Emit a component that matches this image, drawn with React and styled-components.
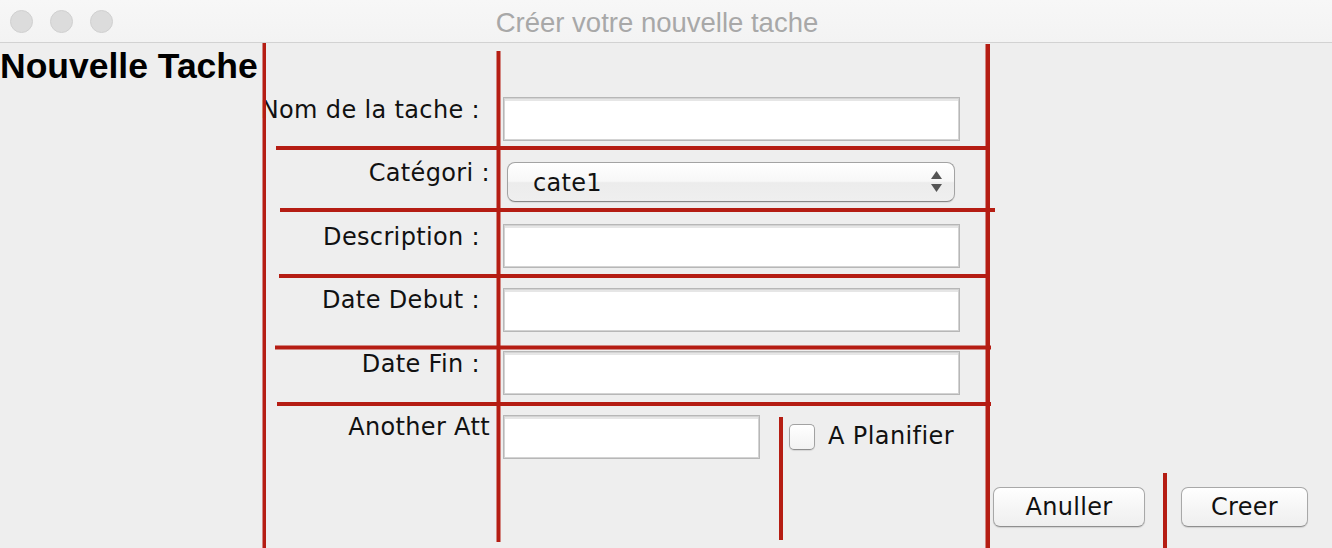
import React from "react";
import styled, { createGlobalStyle } from "styled-components";

const GlobalStyle = createGlobalStyle`
    html, body {
        margin: 0;
        padding: 0;
        background: #eeeeee;
    }
    * {
        box-sizing: border-box;
    }
`;

const Window = styled.div`
    position: relative;
    width: 1332px;
    height: 548px;
    overflow: hidden;
    background: #eeeeee;
    font-family: "DejaVu Sans", "Liberation Sans", sans-serif;
    color: #111111;
`;

const TitleBar = styled.div`
    display: grid;
    height: 43px;
    background: linear-gradient(#f7f7f7, #f3f3f3);
    border-bottom: 1px solid #d2d2d2;
    align-items: center;
`;

const Lights = styled.div`
    grid-area: 1 / 1;
    display: flex;
    gap: 17px;
    padding-left: 10px;
`;

const Light = styled.span`
    width: 23px;
    height: 23px;
    border-radius: 50%;
    background: #dcdcdc;
    border: 1px solid #d0d0d0;
`;

const WindowTitle = styled.div`
    grid-area: 1 / 1;
    text-align: center;
    padding-right: 18px;
    font-family: "Liberation Sans", Arial, sans-serif;
    font-size: 27.5px;
    color: #a8a8a8;
    margin-top: 3px;
`;

const Content = styled.div`
    padding-top: 3px;
`;

const Heading = styled.h1`
    margin: 0;
    font-family: "Liberation Sans", Arial, sans-serif;
    font-weight: bold;
    font-size: 35.5px;
    line-height: 40px;
    color: #000000;
`;

const Form = styled.div`
    display: grid;
    grid-template-columns: 503px 482px 1fr;
    grid-template-rows: repeat(6, 63.6px) 1fr;
    margin-top: 11px;
`;

const Label = styled.div`
    grid-column: 1;
    text-align: right;
    padding-right: ${(p) => (p.$wide ? "13px" : "23px")};
    margin-top: -1.5px;
    font-size: 24px;
    letter-spacing: 0.35px;
    white-space: nowrap;
`;

const Field = styled.div`
    grid-column: 2;
    display: flex;
    align-items: flex-start;
`;

const TextInput = styled.div`
    width: ${(p) => p.$width || 457}px;
    height: 44px;
    background: #ffffff;
    border: 1px solid #b7b7b7;
    box-shadow: inset 0 0 0 1px #d3d3d3, inset 0 2px 0 1px #e6e6e6;
`;

const Combo = styled.div`
    display: flex;
    align-items: center;
    justify-content: space-between;
    width: 448px;
    height: 40px;
    margin: 1.5px 0 0 4px;
    padding: 0 12px 0 25px;
    border-radius: 8px;
    border: 1px solid #a3a3a3;
    border-bottom-color: #888888;
    background: linear-gradient(#ffffff, #f7f7f7 48%, #ececec 52%, #efefef);
    box-shadow: 0 1px 1px rgba(0, 0, 0, 0.08);
    font-size: 24px;
`;

const ComboText = styled.span`
    margin-top: 1px;
    letter-spacing: 0.3px;
`;

const Check = styled.label`
    display: flex;
    align-items: center;
    gap: 13px;
    margin: 7px 0 0 29px;
    font-size: 24px;
    letter-spacing: 0.4px;
`;

const CheckBox = styled.span`
    width: 26px;
    height: 26px;
    margin-top: 2px;
    border-radius: 5px;
    border: 1px solid #a2a2a2;
    border-bottom-color: #8e8e8e;
    background: linear-gradient(#ffffff, #f2f2f2);
    box-shadow: 0 1px 1px rgba(0, 0, 0, 0.1);
`;

const Actions = styled.div`
    grid-column: 3;
    grid-row: 7;
    display: flex;
    align-items: flex-start;
    gap: 36px;
    padding: 8.4px 0 0 8px;
`;

const Button = styled.button`
    width: ${(p) => p.$width}px;
    height: 40px;
    padding: 0;
    border-radius: 7px;
    border: 1px solid #a8a8a8;
    border-bottom-color: #8f8f8f;
    background: linear-gradient(#ffffff, #f6f6f6 50%, #efefef);
    box-shadow: 0 1px 1px rgba(0, 0, 0, 0.12);
    font-family: "DejaVu Sans", sans-serif;
    font-size: 24px;
    letter-spacing: 0.3px;
    color: #111111;
`;

const Marks = styled.svg`
    position: absolute;
    top: 0;
    left: 0;
    pointer-events: none;
`;

const marks = [
    // vertical strokes
    { x: 262.5, y: 43, w: 3.5, h: 505 },
    { x: 496.5, y: 51, w: 4, h: 491 },
    { x: 985.5, y: 44, w: 4.5, h: 504 },
    { x: 779, y: 417, w: 4, h: 123 },
    { x: 1163, y: 473, w: 4, h: 75 },
    // horizontal strokes
    { x: 276, y: 146, w: 712, h: 4 },
    { x: 280, y: 208, w: 715, h: 4 },
    { x: 279, y: 274, w: 710, h: 4 },
    { x: 275, y: 345.5, w: 716, h: 4 },
    { x: 277, y: 402, w: 714, h: 4 },
];

function ArrowsIcon() {
    return (
        <svg width="11" height="22" viewBox="0 0 11 22">
            <path d="M5.5 0 L11 8 L0 8 Z" fill="#555555" />
            <path d="M0 13 L11 13 L5.5 21 Z" fill="#555555" />
        </svg>
    );
}

const rows = [
    { label: "Nom de la tache :" },
    { label: "Catégori :", wide: true, combo: true },
    { label: "Description :" },
    { label: "Date Debut :" },
    { label: "Date Fin :" },
];

function App() {
    return (
        <>
            <GlobalStyle />
            <Window>
                <TitleBar>
                    <Lights>
                        <Light />
                        <Light />
                        <Light />
                    </Lights>
                    <WindowTitle>Créer votre nouvelle tache</WindowTitle>
                </TitleBar>
                <Content>
                    <Heading>Nouvelle Tache</Heading>
                    <Form>
                        {rows.map((r) => (
                            <React.Fragment key={r.label}>
                                <Label $wide={r.wide}>{r.label}</Label>
                                <Field>
                                    {r.combo ? (
                                        <Combo>
                                            <ComboText>cate1</ComboText>
                                            <ArrowsIcon />
                                        </Combo>
                                    ) : (
                                        <TextInput />
                                    )}
                                </Field>
                            </React.Fragment>
                        ))}
                        <Label $wide>Another Att</Label>
                        <Field>
                            <TextInput $width={257} />
                            <Check>
                                <CheckBox />
                                A Planifier
                            </Check>
                        </Field>
                        <Actions>
                            <Button $width={152}>Anuller</Button>
                            <Button $width={127}>Creer</Button>
                        </Actions>
                    </Form>
                </Content>
                <Marks width="1332" height="548">
                    {marks.map((m, i) => (
                        <rect key={i} x={m.x} y={m.y} width={m.w} height={m.h} fill="#b51d13" />
                    ))}
                </Marks>
            </Window>
        </>
    );
}

export default App;
